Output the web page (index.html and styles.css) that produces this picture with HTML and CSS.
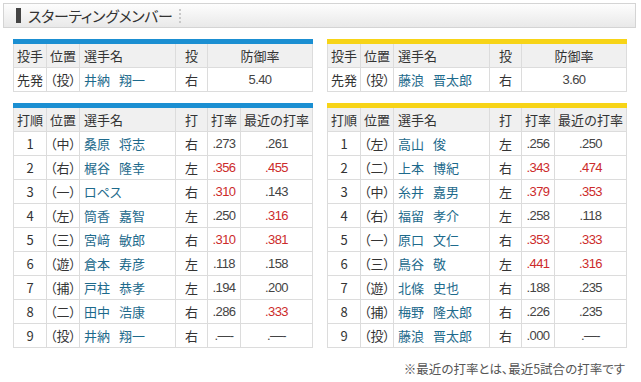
FILE: index.html
```html
<!DOCTYPE html>
<html lang="ja">
<head>
<meta charset="utf-8">
<link rel="stylesheet" href="styles.css">
</head>
<body>
<div class="page">
  <div class="title">
    <span class="title-mark"></span>
    <span class="title-text">スターティングメンバー</span>
    <span class="title-sep"></span>
  </div>
  <div class="teams">
    <div class="team team-blue">
      <table class="tbl">
        <colgroup><col class="c1"><col class="c2"><col class="c3"><col class="c4"><col></colgroup>
        <tr class="head"><th>投手</th><th>位置</th><th class="l">選手名</th><th>投</th><th>防御率</th></tr>
        <tr><td>先発</td><td>（投）</td><td class="name">井納 翔一</td><td>右</td><td class="num">5.40</td></tr>
      </table>
      <table class="tbl">
        <colgroup><col class="c1"><col class="c2"><col class="c3"><col class="c4"><col class="c5"><col></colgroup>
        <tr class="head"><th>打順</th><th>位置</th><th class="l">選手名</th><th>打</th><th>打率</th><th>最近の打率</th></tr>
        <tr><td>1</td><td>（中）</td><td class="name">桑原 将志</td><td>右</td><td class="num">.273</td><td class="num">.261</td></tr>
        <tr><td>2</td><td>（右）</td><td class="name">梶谷 隆幸</td><td>左</td><td class="num red">.356</td><td class="num red">.455</td></tr>
        <tr><td>3</td><td>（一）</td><td class="name">ロペス</td><td>右</td><td class="num red">.310</td><td class="num">.143</td></tr>
        <tr><td>4</td><td>（左）</td><td class="name">筒香 嘉智</td><td>左</td><td class="num">.250</td><td class="num red">.316</td></tr>
        <tr><td>5</td><td>（三）</td><td class="name">宮﨑 敏郎</td><td>右</td><td class="num red">.310</td><td class="num red">.381</td></tr>
        <tr><td>6</td><td>（遊）</td><td class="name">倉本 寿彦</td><td>左</td><td class="num">.118</td><td class="num">.158</td></tr>
        <tr><td>7</td><td>（捕）</td><td class="name">戸柱 恭孝</td><td>左</td><td class="num">.194</td><td class="num">.200</td></tr>
        <tr><td>8</td><td>（二）</td><td class="name">田中 浩康</td><td>右</td><td class="num">.286</td><td class="num red">.333</td></tr>
        <tr><td>9</td><td>（投）</td><td class="name">井納 翔一</td><td>右</td><td class="num">.—-</td><td class="num">.—-</td></tr>
      </table>
    </div>
    <div class="team team-yellow">
      <table class="tbl">
        <colgroup><col class="c1"><col class="c2"><col class="c3"><col class="c4"><col></colgroup>
        <tr class="head"><th>投手</th><th>位置</th><th class="l">選手名</th><th>投</th><th>防御率</th></tr>
        <tr><td>先発</td><td>（投）</td><td class="name">藤浪 晋太郎</td><td>右</td><td class="num">3.60</td></tr>
      </table>
      <table class="tbl">
        <colgroup><col class="c1"><col class="c2"><col class="c3"><col class="c4"><col class="c5"><col></colgroup>
        <tr class="head"><th>打順</th><th>位置</th><th class="l">選手名</th><th>打</th><th>打率</th><th>最近の打率</th></tr>
        <tr><td>1</td><td>（左）</td><td class="name">高山 俊</td><td>左</td><td class="num">.256</td><td class="num">.250</td></tr>
        <tr><td>2</td><td>（二）</td><td class="name">上本 博紀</td><td>右</td><td class="num red">.343</td><td class="num red">.474</td></tr>
        <tr><td>3</td><td>（中）</td><td class="name">糸井 嘉男</td><td>左</td><td class="num red">.379</td><td class="num red">.353</td></tr>
        <tr><td>4</td><td>（右）</td><td class="name">福留 孝介</td><td>左</td><td class="num">.258</td><td class="num">.118</td></tr>
        <tr><td>5</td><td>（一）</td><td class="name">原口 文仁</td><td>右</td><td class="num red">.353</td><td class="num red">.333</td></tr>
        <tr><td>6</td><td>（三）</td><td class="name">鳥谷 敬</td><td>左</td><td class="num red">.441</td><td class="num red">.316</td></tr>
        <tr><td>7</td><td>（遊）</td><td class="name">北條 史也</td><td>右</td><td class="num">.188</td><td class="num">.235</td></tr>
        <tr><td>8</td><td>（捕）</td><td class="name">梅野 隆太郎</td><td>右</td><td class="num">.226</td><td class="num">.235</td></tr>
        <tr><td>9</td><td>（投）</td><td class="name">藤浪 晋太郎</td><td>右</td><td class="num">.000</td><td class="num">.—-</td></tr>
      </table>
      <p class="note">※最近の打率とは、最近5試合の打率です</p>
    </div>
  </div>
</div>
</body>
</html>
```
FILE: styles.css
```css
html, body {
  margin: 0;
  padding: 0;
  background: #fff;
}
body {
  font-family: "Noto Sans CJK JP", "Noto Sans", sans-serif;
  color: #333;
  font-size: 13px;
  font-feature-settings: "palt";
}
.page {
  width: 641px;
  padding-top: 3px;
}
.title {
  margin: 0 5px 0 3px;
  height: 23px;
  border: 1px solid #d4d4d4;
  background: linear-gradient(#fdfdfd, #e9e9e9);
  display: flex;
  align-items: center;
}
.title-mark {
  width: 5px;
  height: 15px;
  background: #444;
  margin-left: 12px;
  margin-right: 7px;
}
.title-text {
  font-size: 15px;
  color: #333;
  letter-spacing: -0.3px;
  line-height: 23px;
}
.title-sep {
  width: 0;
  height: 14px;
  border-left: 2px dotted #c8c8c8;
  margin-left: 6px;
}
.teams {
  display: flex;
  gap: 14px;
  padding-left: 13px;
  margin-top: 11px;
}
.team {
  width: 300px;
  display: flex;
  flex-direction: column;
  gap: 11px;
}
.tbl {
  width: 300px;
  table-layout: fixed;
  border-collapse: collapse;
}
.team-blue .tbl { border-top: 5px solid #1b8fd2; }
.team-yellow .tbl { border-top: 5px solid #f7d417; }
.c1 { width: 33px; }
.c2 { width: 33px; }
.c3 { width: 96px; }
.c4 { width: 32px; }
.c5 { width: 33px; }
.tbl th, .tbl td {
  border: 1px solid #dcdcdc;
  height: 23px;
  padding: 0;
  line-height: 22px;
  text-align: center;
  font-weight: normal;
  white-space: nowrap;
  overflow: hidden;
}
.tbl th {
  background: #f0f0f0;
  color: #333;
  font-feature-settings: normal;
}
.tbl .l {
  text-align: left;
  padding-left: 4px;
}
.tbl .name {
  text-align: left;
  padding-left: 4px;
  color: #1d6a8c;
  word-spacing: 6px;
}
.tbl .num {
  font-family: "Liberation Sans", sans-serif;
  font-size: 13px;
  letter-spacing: -0.6px;
  color: #444;
}
.tbl .red { color: #cc2b2b; }
.note {
  margin: 0 2px 0 0;
  text-align: right;
  font-size: 12.5px;
  color: #555;
}
```
